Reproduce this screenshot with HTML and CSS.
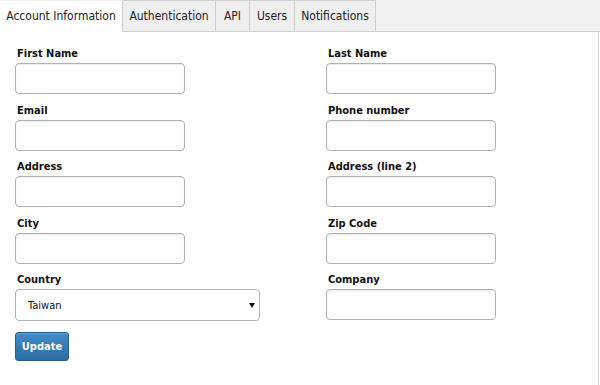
FILE: index.html
```html
<!DOCTYPE html>
<html>
<head>
<meta charset="utf-8">
<link rel="stylesheet" href="styles.css">
</head>
<body>
<div class="tabs">
  <div class="tab active">Account Information</div>
  <div class="tab">Authentication</div>
  <div class="tab">API</div>
  <div class="tab">Users</div>
  <div class="tab">Notifications</div>
</div>
<div class="panel">
  <form class="grid">
    <div class="field"><label>First Name</label><input class="inp" type="text"></div>
    <div class="field"><label>Last Name</label><input class="inp" type="text"></div>
    <div class="field"><label>Email</label><input class="inp" type="text"></div>
    <div class="field"><label>Phone number</label><input class="inp" type="text"></div>
    <div class="field"><label>Address</label><input class="inp" type="text"></div>
    <div class="field"><label>Address (line 2)</label><input class="inp" type="text"></div>
    <div class="field"><label>City</label><input class="inp" type="text"></div>
    <div class="field"><label>Zip Code</label><input class="inp" type="text"></div>
    <div class="field"><label>Country</label>
      <div class="selwrap"><select class="sel"><option>Taiwan</option></select></div>
    </div>
    <div class="field"><label>Company</label><input class="inp" type="text"></div>
  </form>
  <button class="btn" type="button">Update</button>
</div>
</body>
</html>
```
FILE: styles.css
```css
html, body {
  margin: 0;
  padding: 0;
  background: #fff;
  font-family: "DejaVu Sans Condensed", "DejaVu Sans", sans-serif;
  color: #222;
}
.tabs {
  display: flex;
  background: #f2f2f2;
  border-bottom: 1px solid #cfcfcf;
  height: 31px;
  width: 600px;
}
.tab {
  box-sizing: border-box;
  height: 32px;
  padding: 0;
  display: flex;
  align-items: center;
  justify-content: center;
  white-space: nowrap;
  font-size: 12px;
  color: #222;
  background: #efefef;
  border: 1px solid #cfcfcf;
  border-left: none;
  margin-bottom: -1px;
}
.tab.active {
  background: #fff;
  border-top: 1px solid #f0f0f0;
  border-bottom: 1px solid #fff;
  width: 123px;
}
.tab:nth-child(2) { width: 93px; }
.tab:nth-child(3) { width: 34px; }
.tab:nth-child(4) { width: 45px; }
.tab:nth-child(5) { width: 81px; }
.panel {
  box-sizing: border-box;
  width: 599px;
  height: 354px;
  border-right: 1px solid #d8d8d8;
  padding: 14px 0 0 15px;
}
.grid {
  display: grid;
  grid-template-columns: 311px 1fr;
  row-gap: 8.5px;
  margin: 0;
}
.field {
  display: flex;
  flex-direction: column;
}
.field label {
  font-weight: bold;
  font-size: 11px;
  line-height: 15px;
  padding-left: 2px;
  margin-bottom: 2px;
  color: #111;
}
.inp {
  box-sizing: border-box;
  width: 170px;
  height: 31px;
  border: 1px solid #aeb3b8;
  border-radius: 4px;
  box-shadow: inset 0 1px 1px rgba(0,0,0,0.08);
  margin: 0;
  background: #fff;
}
.selwrap {
  position: relative;
  width: 245px;
}
.selwrap::after {
  content: "";
  position: absolute;
  right: 5px;
  top: 14px;
  border-left: 3px solid transparent;
  border-right: 3px solid transparent;
  border-top: 5px solid #111;
  pointer-events: none;
}
.sel {
  -webkit-appearance: none;
  appearance: none;
  box-sizing: border-box;
  width: 245px;
  height: 32px;
  border: 1px solid #aeb3b8;
  border-radius: 4px;
  background: #fff;
  font-family: "DejaVu Sans Condensed", "DejaVu Sans", sans-serif;
  font-size: 11px;
  color: #111;
  padding: 0 0 0 12px;
  margin: 0;
}
.btn {
  margin-top: 11px;
  width: 54px;
  height: 29px;
  border: 1px solid #285e8e;
  border-radius: 3px;
  background: linear-gradient(#428bca, #2d6ca2);
  color: #fff;
  font-family: "DejaVu Sans Condensed", "DejaVu Sans", sans-serif;
  font-size: 11px;
  font-weight: bold;
  padding: 0;
  box-shadow: inset 0 1px 0 rgba(255,255,255,0.15);
}
```
